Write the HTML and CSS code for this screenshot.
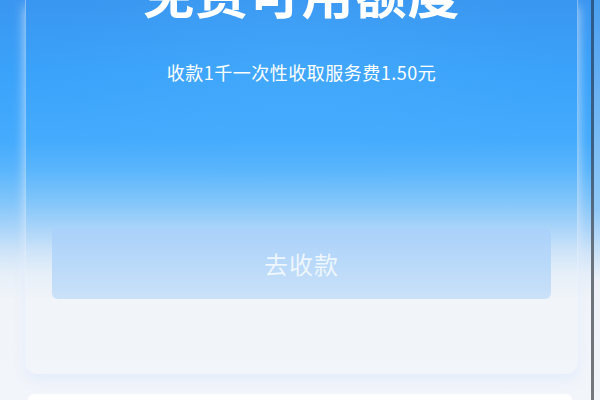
FILE: index.html
```html
<!DOCTYPE html>
<html lang="zh">
<head>
<meta charset="utf-8">
<link rel="stylesheet" href="styles.css">
</head>
<body>
<div class="screen">
  <div class="main">
    <div class="panel">
      <h1 class="title">免费可用额度</h1>
      <p class="subtitle">收款1千一次性收取服务费1.50元</p>
      <div class="btn">去收款</div>
    </div>
    <div class="next-card"></div>
  </div>
  <div class="rail"></div>
  <div class="edge"></div>
</div>
</body>
</html>
```
FILE: styles.css
```css
html, body {
  margin: 0;
  padding: 0;
  width: 600px;
  height: 400px;
  overflow: hidden;
  background: #f2f5fa;
  font-family: "Noto Sans CJK SC", "Noto Sans", sans-serif;
}
.screen {
  display: flex;
  width: 600px;
  height: 400px;
}
.main {
  flex: 1;
  display: flex;
  flex-direction: column;
  padding: 0 13px 0 25px;
  background:
    radial-gradient(ellipse 260px 120px at 300px 70px, rgba(80,180,255,0.3), rgba(80,180,255,0) 100%),
    linear-gradient(180deg, #3a96f0 0px, #3aa2fa 70px, #44abfd 140px, #5ab5fc 170px, #7fc4fa 200px, #a9d4f9 228px, #cfe4f8 252px, #e6eff9 274px, #f1f4f9 300px, #f2f5fa 400px);
}
.panel {
  display: flex;
  flex-direction: column;
  align-items: center;
  padding: 0 26px 74px;
  border-radius: 0 0 12px 12px;
  box-shadow: 0 6px 12px rgba(225,235,252,0.8);
  border: 1px solid rgba(238,244,252,0.4);
  border-top: none;
}
.title {
  margin: -34px 0 0;
  font-size: 52px;
  line-height: 52px;
  font-weight: 700;
  color: #ffffff;
  letter-spacing: 1px;
}
.subtitle {
  margin: 42px 0 0;
  font-size: 18px;
  line-height: 24px;
  letter-spacing: 0.5px;
  color: #ffffff;
}
.btn {
  align-self: stretch;
  margin-top: 144px;
  height: 71px;
  display: flex;
  align-items: center;
  justify-content: center;
  border-radius: 6px;
  background: linear-gradient(180deg, #a9d1fa 0%, #b9d9f9 50%, #cbe1f8 100%);
  color: #eef6fe;
  font-size: 24px;
  letter-spacing: 1px;
}
.next-card {
  margin: 20px 0 0 3px;
  height: 20px;
  background: #ffffff;
  border-radius: 6px 6px 0 0;
  width: 544px;
}
.rail {
  width: 3px;
  background: linear-gradient(180deg, #2b5a8c 0%, #3b5f84 150px, #6a737d 260px, #76787b 400px);
}
.edge {
  width: 6px;
  background: linear-gradient(180deg, #4a9ff0 0%, #90c9f7 210px, #eef2f8 280px, #f2f5fa 400px);
}
```
